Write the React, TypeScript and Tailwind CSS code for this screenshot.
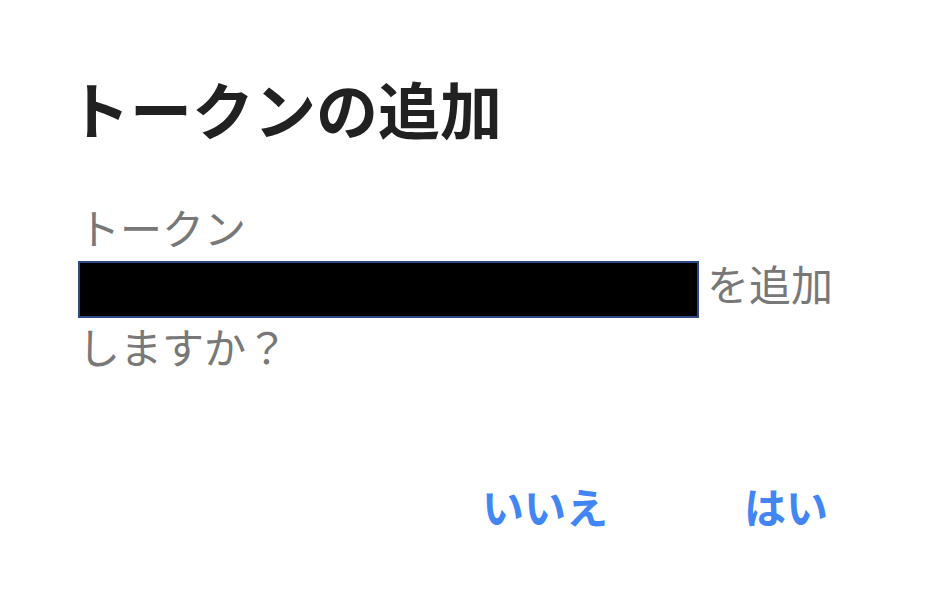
export default function App() {
  return (
    <div
      className="w-[936px] h-[592px] bg-white flex flex-col"
      style={{ fontFamily: '"Noto Sans CJK JP", "Noto Sans", sans-serif' }}
    >
      <h1 className="pl-[68px] pt-[68px] text-[62px] leading-[80px] font-bold text-[#212121]">
        トークンの追加
      </h1>
      <p className="pl-[78px] pr-[90px] mt-[51px] text-[42px] leading-[56px] text-[#787878]">
        トークン
        <br />
        <span className="inline-block align-middle w-[621px] h-[57px] bg-black border-2 border-[#2c4a86] mr-[8px]" />
        を追加しますか？
      </p>
      <div className="flex justify-end items-center mt-[104px] pr-[108px] gap-[136px]">
        <button className="text-[42px] leading-[56px] font-bold text-[#4285f4]">いいえ</button>
        <button className="text-[42px] leading-[56px] font-bold text-[#4285f4]">はい</button>
      </div>
    </div>
  );
}
